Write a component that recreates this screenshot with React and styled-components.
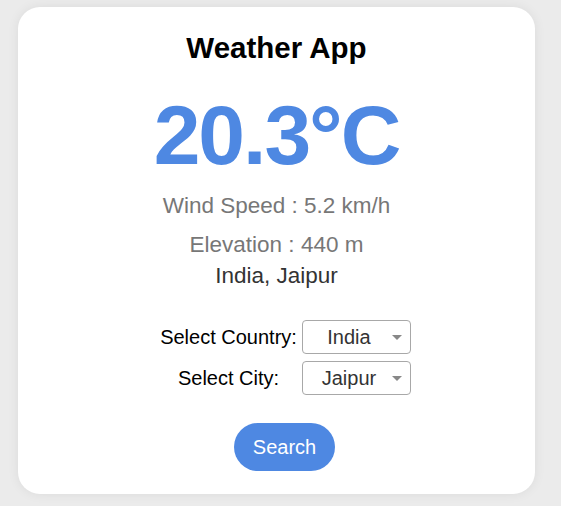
import React, { useState } from 'react'
import styled, { createGlobalStyle } from 'styled-components'

const Global = createGlobalStyle`
  body {
    margin: 0;
    background: #ebebeb;
    font-family: "Liberation Sans", Arial, sans-serif;
  }
`;

const Page = styled.div`
  padding: 7px 26px 13px 18px;
`;

const Card = styled.div`
  background: #fff;
  border-radius: 22px;
  box-shadow: 0 0 12px rgba(0, 0, 0, 0.07);
  display: flex;
  flex-direction: column;
  align-items: center;
  padding-top: 24px;
  height: 487px;
  box-sizing: border-box;
`;

const Title = styled.h1`
  margin: 0;
  font-size: 29.5px;
  line-height: 34px;
  font-weight: bold;
  color: #000;
`;

const Temp = styled.div`
  margin-top: 28px;
  font-size: 84px;
  line-height: 84px;
  letter-spacing: -2px;
  font-weight: bold;
  color: #4e88e2;
`;

const Info = styled.p`
  margin: ${p => p.$top}px 0 0;
  font-size: 22.5px;
  line-height: 26px;
  color: ${p => p.$dark ? '#333' : '#777'};
`;

const Controls = styled.div`
  margin-top: 31px;
  margin-left: 16px;
  display: flex;
  flex-direction: column;
  align-items: center;
`;

const Form = styled.div`
  display: grid;
  grid-template-columns: 140px 109px;
  column-gap: 3px;
  row-gap: 7px;
  align-items: center;
`;

const Label = styled.label`
  font-size: 20px;
  color: #000;
  text-align: center;
`;

const SelectBox = styled.div`
  position: relative;

  &::after {
    content: '';
    position: absolute;
    right: 9px;
    top: 15px;
    border-left: 5px solid transparent;
    border-right: 5px solid transparent;
    border-top: 5px solid #888;
    pointer-events: none;
  }
`;

const Select = styled.select`
  appearance: none;
  width: 109px;
  height: 34px;
  font-family: "Liberation Sans", Arial, sans-serif;
  font-size: 20px;
  color: #333;
  background: #fff;
  border: 1px solid #a8a8a8;
  border-radius: 4px;
  text-align: center;
  padding: 0 14px 0 0;
  outline: none;
`;

const Button = styled.button`
  margin-top: 28px;
  width: 101px;
  height: 48px;
  border: none;
  border-radius: 24px;
  background: #4e88e2;
  color: #fff;
  font-family: "Liberation Sans", Arial, sans-serif;
  font-size: 20px;
  cursor: pointer;
`;

export default function App() {
  const [country, setCountry] = useState('India')
  const [city, setCity] = useState('Jaipur')
  return (
    <Page>
      <Global />
      <Card>
        <Title>Weather App</Title>
        <Temp>20.3°C</Temp>
        <Info $top={16}>Wind Speed : 5.2 km/h</Info>
        <Info $top={13}>Elevation : 440 m</Info>
        <Info $top={5} $dark>{country}, {city}</Info>
        <Controls>
          <Form>
            <Label>Select Country:</Label>
            <SelectBox>
              <Select value={country} onChange={e => setCountry(e.target.value)}>
                <option>India</option>
                <option>USA</option>
              </Select>
            </SelectBox>
            <Label>Select City:</Label>
            <SelectBox>
              <Select value={city} onChange={e => setCity(e.target.value)}>
                <option>Jaipur</option>
                <option>Delhi</option>
              </Select>
            </SelectBox>
          </Form>
          <Button>Search</Button>
        </Controls>
      </Card>
    </Page>
  )
}
